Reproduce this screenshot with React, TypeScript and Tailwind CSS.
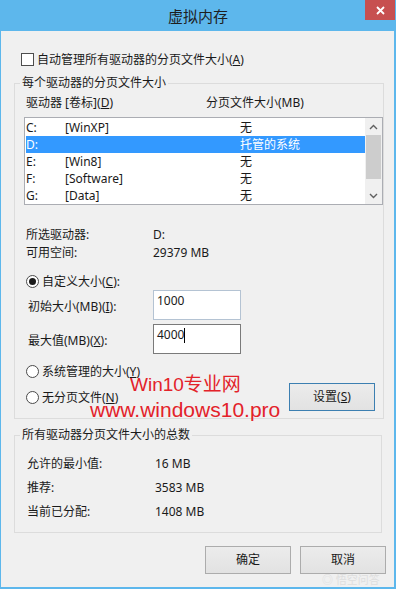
import React from "react";

function U({ c }: { c: string }) {
  return <span className="underline decoration-1 underline-offset-[1px]">{c}</span>;
}

function Radio({ checked = false }: { checked?: boolean }) {
  return (
    <span className="flex h-[13px] w-[13px] shrink-0 items-center justify-center rounded-full border border-[#4a4a4a] bg-white">
      {checked && <span className="h-[7px] w-[7px] rounded-full bg-[#1a1a1a]" />}
    </span>
  );
}

function Chevron({ up }: { up: boolean }) {
  return (
    <svg width="9" height="6" viewBox="0 0 9 6">
      <path
        d={up ? "M1 5 L4.5 1.5 L8 5" : "M1 1 L4.5 4.5 L8 1"}
        fill="none"
        stroke="#606060"
        strokeWidth="1.4"
      />
    </svg>
  );
}

const drives = [
  ["C:", "[WinXP]", "无"],
  ["D:", "", "托管的系统"],
  ["E:", "[Win8]", "无"],
  ["F:", "[Software]", "无"],
  ["G:", "[Data]", "无"],
];

function Btn({ children, focus = false }: { children: React.ReactNode; focus?: boolean }) {
  return (
    <div
      className={
        "flex h-[28px] w-[86px] items-center justify-center border bg-gradient-to-b from-[#ececec] to-[#e2e2e2] leading-[16px] " +
        (focus ? "border-[#3c7fb1]" : "border-[#acacac]")
      }
    >
      {children}
    </div>
  );
}

export default function App() {
  return (
    <div className="relative flex h-[589px] w-[396px] flex-col overflow-hidden bg-[#5db7ec] font-['Noto_Sans','Noto_Sans_CJK_SC',sans-serif] text-[12px] text-[#1a1a1a]">
      {/* title bar */}
      <div className="grid h-[31px] shrink-0 grid-cols-[1fr_auto_1fr]">
        <div />
        <div className="flex items-center text-[15px] leading-[20px] text-[#1e1e1e]">虚拟内存</div>
        <div className="flex justify-end">
          <div className="mr-[1px] flex h-[20px] w-[30px] items-center justify-center bg-[#c75050]">
            <svg width="9" height="9" viewBox="0 0 9 9">
              <path d="M1 1 L8 8 M8 1 L1 8" stroke="#ffffff" strokeWidth="1.8" />
            </svg>
          </div>
        </div>
      </div>

      {/* body */}
      <div className="mb-[2px] ml-[1px] mr-[2px] flex flex-1 flex-col bg-[#f0f0f0]">
        {/* auto manage checkbox */}
        <div className="ml-[20px] mt-[20px] flex h-[17px] items-center gap-[3px] leading-[17px]">
          <span className="h-[13px] w-[13px] shrink-0 border border-[#4d4d4d] bg-white" />
          <span>
            自动管理所有驱动器的分页文件大小(<U c="A" />)
          </span>
        </div>

        {/* group 1 */}
        <fieldset className="ml-[13px] mt-[7px] w-[368px] border border-[#dcdcdc] pb-[7px]">
          <legend className="ml-[5px] px-[2px] leading-[16px]">每个驱动器的分页文件大小</legend>
          <div className="mt-[4px] flex h-[16px] pl-[11px] leading-[16px]">
            <span className="w-[180px]">
              驱动器 [卷标](<U c="D" />)
            </span>
            <span>分页文件大小(MB)</span>
          </div>

          {/* listbox */}
          <div className="ml-[9px] mt-[6px] flex h-[88px] w-[359px] border border-[#abadb3] bg-white">
            <div className="flex w-[340px] flex-col pl-[1px] pt-[1px]">
              {drives.map((d, i) => (
                <div
                  key={d[0]}
                  className={
                    "flex h-[17px] items-center leading-[17px] " +
                    (i === 1 ? "bg-[#3399ff] text-white" : "")
                  }
                >
                  <span className="w-[39px]">{d[0]}</span>
                  <span className="w-[175px]">{d[1]}</span>
                  <span>{d[2]}</span>
                </div>
              ))}
            </div>
            <div className="flex w-[17px] flex-col bg-[#f0f0f0]">
              <div className="flex h-[17px] items-center justify-center">
                <Chevron up />
              </div>
              <div className="mx-[1px] h-[44px] bg-[#cdcdcd]" />
              <div className="flex-1" />
              <div className="flex h-[17px] items-center justify-center">
                <Chevron up={false} />
              </div>
            </div>
          </div>

          {/* info */}
          <div className="mt-[21px] flex flex-col pl-[11px]">
            <div className="flex h-[18px] items-center leading-[18px]">
              <span className="w-[127px]">所选驱动器:</span>
              <span>D:</span>
            </div>
            <div className="flex h-[18px] items-center leading-[18px]">
              <span className="w-[127px]">可用空间:</span>
              <span>29379 MB</span>
            </div>
          </div>

          {/* custom size */}
          <div className="mt-[11px] flex h-[17px] items-center gap-[3px] pl-[11px] leading-[17px]">
            <Radio checked />
            <span>
              自定义大小(<U c="C" />):
            </span>
          </div>

          <div className="flex h-[30px] items-start pl-[13px]">
            <span className="w-[125px] pt-[8px] leading-[17px]">
              初始大小(MB)(<U c="I" />):
            </span>
            <div className="h-[30px] w-[88px] border border-[#b4c3d3] bg-white pl-[3px] pt-[2px] leading-[16px]">
              1000
            </div>
          </div>
          <div className="mt-[4px] flex h-[30px] items-start pl-[13px]">
            <span className="w-[125px] pt-[8px] leading-[17px]">
              最大值(MB)(<U c="X" />):
            </span>
            <div className="flex h-[30px] w-[88px] items-start border border-[#7a7a7a] bg-white pl-[3px] pt-[2px] leading-[16px]">
              <span>4000</span>
              <span className="mt-[1px] h-[15px] w-[1px] bg-black" />
            </div>
          </div>

          <div className="mt-[9px] flex h-[17px] items-center gap-[3px] pl-[11px] leading-[17px]">
            <Radio />
            <span>
              系统管理的大小(<U c="Y" />)
            </span>
          </div>

          <div className="mt-[3px] flex h-[28px] items-center pl-[11px]">
            <div className="flex items-center gap-[3px] leading-[17px]">
              <Radio />
              <span>
                无分页文件(<U c="N" />)
              </span>
            </div>
            <div className="ml-auto mr-[8px]">
              <Btn focus>
                设置(<U c="S" />)
              </Btn>
            </div>
          </div>
        </fieldset>

        {/* group 2 */}
        <fieldset className="ml-[13px] mt-[8px] w-[368px] border border-[#dcdcdc] pb-[9px]">
          <legend className="ml-[5px] px-[2px] leading-[16px]">所有驱动器分页文件大小的总数</legend>
          <div className="flex flex-col pl-[12px] pt-[8px]">
            <div className="flex h-[24px] items-center leading-[17px]">
              <span className="w-[128px]">允许的最小值:</span>
              <span>16 MB</span>
            </div>
            <div className="flex h-[24px] items-center leading-[17px]">
              <span className="w-[128px]">推荐:</span>
              <span>3583 MB</span>
            </div>
            <div className="flex h-[24px] items-center leading-[17px]">
              <span className="w-[128px]">当前已分配:</span>
              <span>1408 MB</span>
            </div>
          </div>
        </fieldset>

        {/* buttons */}
        <div className="mt-[13px] flex justify-end gap-[9px] pr-[8px]">
          <Btn>确定</Btn>
          <Btn>取消</Btn>
        </div>
      </div>

      {/* watermark overlay */}
      <div className="pointer-events-none absolute left-[130px] top-[374px] font-['Liberation_Sans','Noto_Sans_CJK_SC',sans-serif] text-[19px] leading-[22px] text-[#e3222a]">
        Win10专业网
      </div>
      <div className="pointer-events-none absolute left-[90px] top-[398px] font-['Liberation_Sans',sans-serif] text-[21px] leading-[24px] text-[#e3222a]">
        www.windows10.pro
      </div>
      <div className="pointer-events-none absolute left-[322px] top-[574px] text-[11px] leading-[12px] text-[#dedede]">
        ◎ 悟空问答
      </div>
    </div>
  );
}
